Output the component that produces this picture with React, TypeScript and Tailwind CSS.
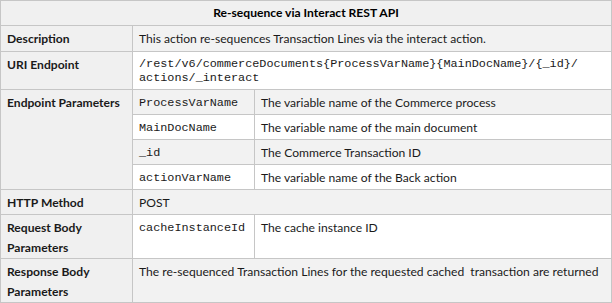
import React from 'react';

const sans = "font-['Segoe_UI','Lato','Open_Sans',sans-serif]";
const mono = "font-['Liberation_Mono','Courier_New',monospace]";

const params = [
  { name: 'ProcessVarName', desc: 'The variable name of the Commerce process' },
  { name: 'MainDocName', desc: 'The variable name of the main document' },
  { name: '_id', desc: 'The Commerce Transaction ID' },
  { name: 'actionVarName', desc: 'The variable name of the Back action' },
];

const label = 'border border-[#c6c6c6] bg-[#f0f0f0] px-[6px] pt-[3px] align-top font-bold text-[#1a1a1a]';
const cell = 'border border-[#c6c6c6] px-[6px] pt-[3px] align-top text-[#1a1a1a]';

const App = () => {
  return (
    <div className={`w-[612px] h-[303px] bg-white ${sans} text-[12.1px] leading-[20px]`}>
      <table className="w-[612px] border-collapse table-fixed">
        <colgroup>
          <col className="w-[132px]" />
          <col className="w-[122px]" />
          <col />
        </colgroup>
        <tbody>
          <tr className="h-[25px]">
            <td colSpan={3} className="border border-[#c6c6c6] bg-[#f0f0f0] text-center font-bold align-middle">
              Re-sequence via Interact REST API
            </td>
          </tr>
          <tr className="h-[26px]">
            <td className={label}>Description</td>
            <td colSpan={2} className={`${cell} bg-[#f2f2f2]`}>
              This action re-sequences Transaction Lines via the interact action.
            </td>
          </tr>
          <tr className="h-[38px]">
            <td className={label}>URI Endpoint</td>
            <td colSpan={2} className={`${cell} bg-white ${mono} text-[11.8px] leading-[14px] pt-[5px]`}>
              /rest/v6/commerceDocuments{'{ProcessVarName}{MainDocName}/{_id}/'}
              <br />
              actions/_interact
            </td>
          </tr>
          {params.map((p, i) => (
            <tr key={p.name} className="h-[25px]">
              {i === 0 && (
                <td rowSpan={4} className={label}>Endpoint Parameters</td>
              )}
              <td className={`${cell} ${i % 2 === 0 ? 'bg-[#f2f2f2]' : 'bg-white'} ${mono} text-[11.8px]`}>{p.name}</td>
              <td className={`${cell} ${i % 2 === 0 ? 'bg-[#f2f2f2]' : 'bg-white'}`}>{p.desc}</td>
            </tr>
          ))}
          <tr className="h-[25px]">
            <td className={label}>HTTP Method</td>
            <td colSpan={2} className={`${cell} bg-[#f2f2f2]`}>POST</td>
          </tr>
          <tr className="h-[43px]">
            <td className={label}>Request Body Parameters</td>
            <td className={`${cell} bg-white ${mono} text-[11.8px]`}>cacheInstanceId</td>
            <td className={`${cell} bg-white`}>The cache instance ID</td>
          </tr>
          <tr className="h-[43px]">
            <td className={label}>Response Body Parameters</td>
            <td colSpan={2} className={`${cell} bg-[#f2f2f2]`}>
              The re-sequenced Transaction Lines for the requested cached&nbsp; transaction are returned
            </td>
          </tr>
        </tbody>
      </table>
    </div>
  );
};

export default App;
